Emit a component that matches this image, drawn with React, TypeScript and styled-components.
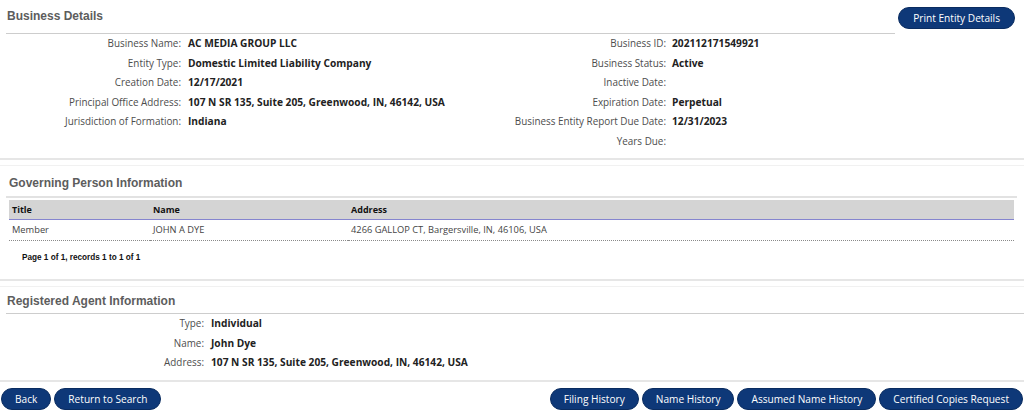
import React from "react";
import styled, { createGlobalStyle } from "styled-components";

const GlobalStyle = createGlobalStyle`
  html, body { margin: 0; padding: 0; background: #fff; }
  body { font-family: "Open Sans", "Noto Sans", sans-serif; color: #333; }
  * { box-sizing: border-box; }
`;

const Page = styled.div`
  width: 1024px;
  height: 416px;
  overflow: hidden;
  background: #fff;
`;

const Panel = styled.section<{ $pb: number }>`
  padding-bottom: ${(p) => p.$pb}px;
  border-bottom: 2px solid #e6e6e6;
  & + & {
    margin-top: 5px;
    border-top: 1px solid #f1f1f1;
  }
`;

const PanelHeader = styled.div`
  display: flex;
  align-items: flex-start;
`;

const TitleBar = styled.div<{
  $pt: number;
  $pb: number;
  $mr: number;
  $indent: number;
  $heavy?: boolean;
}>`
  flex: 1;
  margin: 0 ${(p) => p.$mr}px 0 6px;
  padding: ${(p) => p.$pt}px 0 ${(p) => p.$pb}px ${(p) => p.$indent}px;
  border-bottom: ${(p) => (p.$heavy ? "2px solid #e2e2e2" : "1px solid #cdcdcd")};
`;

const Title = styled.h2`
  margin: 0;
  font: bold 12px/14px "Liberation Sans", Arial, sans-serif;
  color: #5d5d5d;
`;

const PillButton = styled.button<{ $pad?: number }>`
  height: 22px;
  padding: 0 ${(p) => p.$pad ?? 13}px;
  border-radius: 11px;
  background: #0e3878;
  border: 1px solid #0a2c60;
  color: #fff;
  font: 400 10.15px/20px "Open Sans", "Noto Sans", sans-serif;
  white-space: nowrap;
  cursor: pointer;
`;

const HeaderButton = styled(PillButton)`
  margin: 7px 9px 0 3px;
`;

const Columns = styled.div`
  display: grid;
  grid-template-columns: 512px 512px;
`;

const FieldGrid = styled.dl<{ $label: number; $gap: number }>`
  margin: 0;
  display: grid;
  grid-template-columns: ${(p) => p.$label}px 1fr;
  grid-auto-rows: 19.5px;
  column-gap: ${(p) => p.$gap}px;
  line-height: 19.5px;
`;

const Label = styled.dt`
  text-align: right;
  font-size: 9.9px;
  color: #4d4d4d;
  white-space: nowrap;
`;

const Value = styled.dd`
  margin: 0;
  font-size: 10.2px;
  font-weight: 700;
  color: #222;
  white-space: nowrap;
`;

const Table = styled.table`
  margin: 2px 10px 0 9px;
  width: calc(100% - 19px);
  border-collapse: collapse;
  table-layout: fixed;
`;

const HeadCell = styled.th`
  height: 19px;
  padding: 0 3px;
  background: #d4d4d4;
  border-bottom: 1px solid #8585cf;
  text-align: left;
  font: 700 9px/19px "Open Sans", "Noto Sans", sans-serif;
  color: #111;
`;

const Cell = styled.td`
  height: 21px;
  padding: 0 3px;
  border-bottom: 1px dotted #8a8a8a;
  font: 400 9.3px/20px "Open Sans", "Noto Sans", sans-serif;
  color: #444;
  white-space: nowrap;
`;

const Pager = styled.div`
  margin: 11px 0 0 22px;
  font: bold 8.2px/12px "Liberation Sans", Arial, sans-serif;
  color: #111;
`;

const ButtonBar = styled.div`
  display: flex;
  justify-content: space-between;
  margin-top: 6px;
  padding: 0 1px;
`;

const ButtonGroup = styled.div`
  display: flex;
  gap: 3px;
`;

type Field = [string, string];

const leftFields: Field[] = [
  ["Business Name:", "AC MEDIA GROUP LLC"],
  ["Entity Type:", "Domestic Limited Liability Company"],
  ["Creation Date:", "12/17/2021"],
  ["Principal Office Address:", "107 N SR 135, Suite 205, Greenwood, IN, 46142, USA"],
  ["Jurisdiction of Formation:", "Indiana"],
];

const rightFields: Field[] = [
  ["Business ID:", "202112171549921"],
  ["Business Status:", "Active"],
  ["Inactive Date:", ""],
  ["Expiration Date:", "Perpetual"],
  ["Business Entity Report Due Date:", "12/31/2023"],
  ["Years Due:", ""],
];

const agentFields: Field[] = [
  ["Type:", "Individual"],
  ["Name:", "John Dye"],
  ["Address:", "107 N SR 135, Suite 205, Greenwood, IN, 46142, USA"],
];

const Fields = ({ items, label, gap }: { items: Field[]; label: number; gap: number }) => (
  <FieldGrid $label={label} $gap={gap}>
    {items.map(([l, v]) => (
      <React.Fragment key={l}>
        <Label>{l}</Label>
        <Value>{v}</Value>
      </React.Fragment>
    ))}
  </FieldGrid>
);

export default function App() {
  return (
    <Page>
      <GlobalStyle />
      <Panel $pb={7}>
        <PanelHeader>
          <TitleBar $pt={9} $pb={10} $mr={0} $indent={1}>
            <Title>Business Details</Title>
          </TitleBar>
          <HeaderButton $pad={14}>Print Entity Details</HeaderButton>
        </PanelHeader>
        <Columns>
          <Fields items={leftFields} label={181} gap={7} />
          <Fields items={rightFields} label={154} gap={6} />
        </Columns>
      </Panel>

      <Panel $pb={15}>
        <TitleBar $pt={10} $pb={6} $mr={7} $indent={3} $heavy>
          <Title>Governing Person Information</Title>
        </TitleBar>
        <Table>
          <colgroup>
            <col style={{ width: 141 }} />
            <col style={{ width: 198 }} />
            <col />
          </colgroup>
          <thead>
            <tr>
              <HeadCell>Title</HeadCell>
              <HeadCell>Name</HeadCell>
              <HeadCell>Address</HeadCell>
            </tr>
          </thead>
          <tbody>
            <tr>
              <Cell>Member</Cell>
              <Cell>JOHN A DYE</Cell>
              <Cell>4266 GALLOP CT, Bargersville, IN, 46106, USA</Cell>
            </tr>
          </tbody>
        </Table>
        <Pager>Page 1 of 1, records 1 to 1 of 1</Pager>
      </Panel>

      <Panel $pb={7}>
        <TitleBar $pt={7} $pb={5} $mr={0} $indent={1}>
          <Title>Registered Agent Information</Title>
        </TitleBar>
        <Fields items={agentFields} label={204} gap={7} />
      </Panel>

      <ButtonBar>
        <ButtonGroup>
          <PillButton>Back</PillButton>
          <PillButton>Return to Search</PillButton>
        </ButtonGroup>
        <ButtonGroup>
          <PillButton>Filing History</PillButton>
          <PillButton>Name History</PillButton>
          <PillButton>Assumed Name History</PillButton>
          <PillButton>Certified Copies Request</PillButton>
        </ButtonGroup>
      </ButtonBar>
    </Page>
  );
}
